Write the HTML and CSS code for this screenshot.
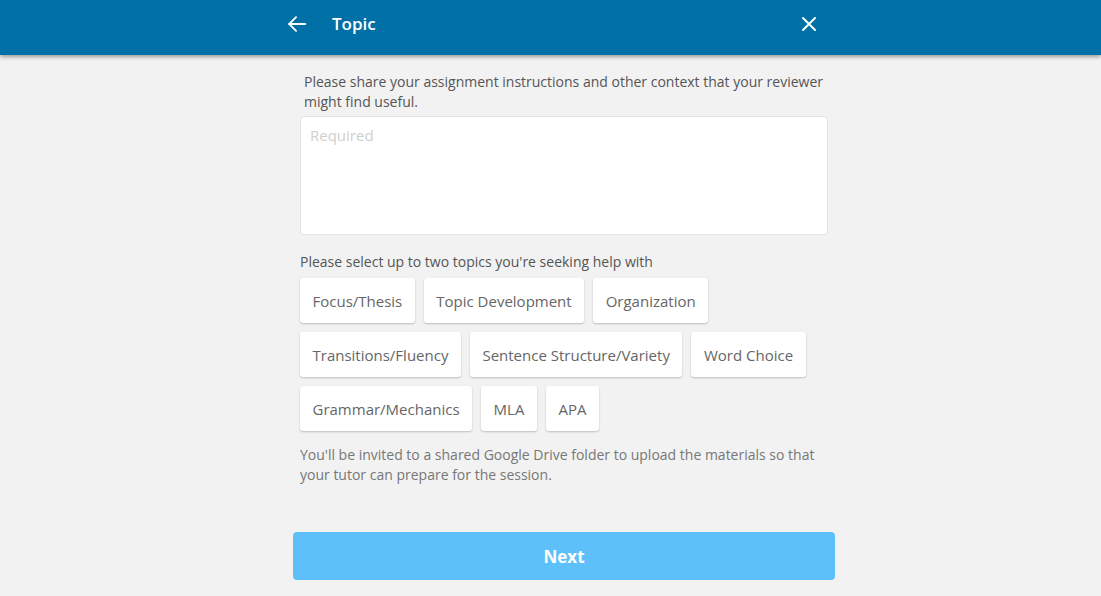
FILE: index.html
```html
<!DOCTYPE html>
<html lang="en">
<head>
    <meta charset="UTF-8">
    <meta name="viewport" content="width=device-width, initial-scale=1.0">
    <title>Topic</title>
    <link rel="stylesheet" href="styles.css">
</head>
<body>
    <header class="topbar">
        <div class="topbar-inner">
            <button class="icon-btn" aria-label="Back">
                <svg width="22" height="22" viewBox="0 0 24 24" fill="none" stroke="#fff" stroke-width="2" stroke-linecap="round" stroke-linejoin="round">
                    <path d="M21 12H3.5"/>
                    <path d="M11 4.5L3.5 12L11 19.5"/>
                </svg>
            </button>
            <h1 class="title">Topic</h1>
            <button class="icon-btn close" aria-label="Close">
                <svg width="16" height="16" viewBox="0 0 16 16" fill="none" stroke="#fff" stroke-width="2" stroke-linecap="round">
                    <path d="M2 2L14 14M14 2L2 14"/>
                </svg>
            </button>
        </div>
    </header>

    <main class="page">
        <div class="form">
            <p class="intro">Please share your assignment instructions and other context that your reviewer might find useful.</p>
            <textarea class="notes" placeholder="Required"></textarea>

            <p class="label">Please select up to two topics you're seeking help with</p>
            <div class="chips">
                <button class="chip">Focus/Thesis</button>
                <button class="chip">Topic Development</button>
                <button class="chip">Organization</button>
                <button class="chip">Transitions/Fluency</button>
                <button class="chip">Sentence Structure/Variety</button>
                <button class="chip">Word Choice</button>
                <button class="chip">Grammar/Mechanics</button>
                <button class="chip">MLA</button>
                <button class="chip">APA</button>
            </div>

            <p class="note">You'll be invited to a shared Google Drive folder to upload the materials so that your tutor can prepare for the session.</p>
        </div>

        <button class="next">Next</button>
    </main>
</body>
</html>
```

FILE: styles.css
```css
* {
    box-sizing: border-box;
}

body {
    margin: 0;
    background-color: #f2f2f2;
    font-family: 'Open Sans', 'Noto Sans', sans-serif;
    color: #555;
}

.topbar {
    height: 55px;
    background-color: #0070a6;
    box-shadow: 0 2px 4px rgba(0,0,0,0.35);
}
.topbar-inner {
    width: 530px;
    height: 100%;
    margin-left: 286px;
    padding-bottom: 8px;
    display: flex;
    align-items: center;
}
.icon-btn {
    background: transparent;
    border: none;
    padding: 0;
    cursor: pointer;
    display: flex;
    align-items: center;
}
.title {
    margin: 0 0 0 24px;
    color: white;
    font-size: 17px;
    font-weight: 600;
    flex-grow: 1;
}
.close {
    margin-right: -1px;
}

.page {
    width: 542px;
    margin-left: 293px;
    padding-top: 17px;
}
.form {
    padding: 0 7px;
}

.intro {
    margin: 0 0 4px;
    padding-left: 4px;
    font-size: 14px;
    line-height: 20px;
    color: #555;
}

.notes {
    display: block;
    width: 100%;
    height: 119px;
    padding: 8px 9px;
    border: 1px solid #e3e3e3;
    border-radius: 4px;
    background: white;
    resize: none;
    outline: none;
    font-family: inherit;
    font-size: 15px;
}
.notes::placeholder {
    color: #cfcfcf;
}

.label {
    margin: 17px 0 6px;
    font-size: 14px;
    line-height: 20px;
    color: #555;
}

.chips {
    display: flex;
    flex-wrap: wrap;
    gap: 9px;
}
.chip {
    height: 45px;
    padding: 0 12.5px;
    background: white;
    border: none;
    border-radius: 3px;
    box-shadow: 0 1px 2px rgba(0,0,0,0.22);
    font-family: inherit;
    font-size: 15px;
    color: #666;
    cursor: pointer;
}

.note {
    margin: 14px 0 0;
    font-size: 14px;
    line-height: 20px;
    color: #777;
}

.next {
    display: block;
    width: 100%;
    height: 48px;
    margin-top: 47px;
    background-color: #5ec0f9;
    border: none;
    border-radius: 4px;
    color: white;
    font-family: inherit;
    font-size: 17px;
    font-weight: 700;
    cursor: pointer;
}
```
